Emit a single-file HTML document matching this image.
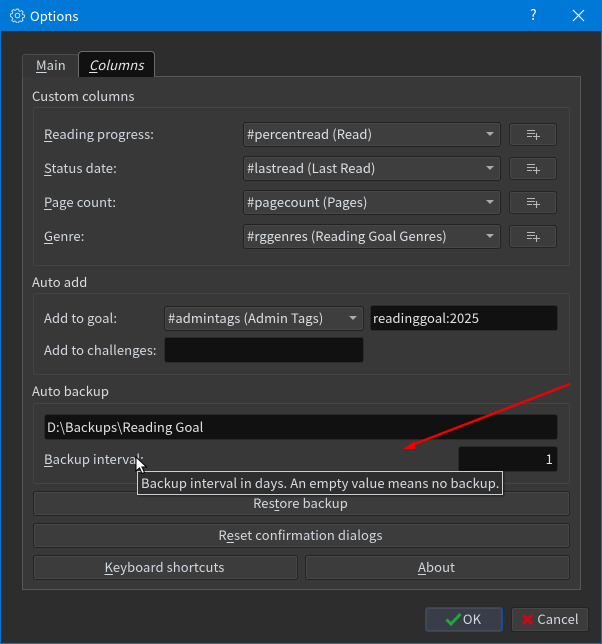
<!DOCTYPE html>
<html><head><meta charset="utf-8">
<style>
html,body{margin:0;padding:0;background:#2d2d2d}
#w{position:relative;width:602px;height:644px;overflow:hidden;background:#2d2d2d;font:13px "Noto Sans CJK JP","Liberation Sans",sans-serif;color:#d2d8de}
#w div{position:absolute;box-sizing:border-box;white-space:nowrap}
.t{line-height:18px;height:18px;letter-spacing:.1px}
.c{border:1px solid #222;border-radius:3px;background:#3e3e3e;box-shadow:inset 0 0 0 1px #474747;line-height:22px;padding-left:3px;letter-spacing:.1px;color:#dbe0e5}
.c:after{content:"";position:absolute;right:6px;top:9px;border:4px solid transparent;border-top:4px solid #aaa;border-bottom:0;width:0;height:0}
.i{background:#111;border:1px solid #2a2a2a;border-radius:3px;line-height:24px;padding-left:2px;letter-spacing:.1px;color:#dfe3e6}
.b{background:#3c3c3c;border:1px solid #242424;border-radius:3px;box-shadow:inset 0 0 0 1px #474747;text-align:center;line-height:21px;padding-right:2px;letter-spacing:.1px;color:#d2d8de}
.g{border:1px solid #444;border-radius:2px}
.gt{color:#d8dce0}
u{text-underline-offset:2px}
</style></head><body>
<div id="w">
<div style="left:0;top:0;width:602px;height:644px;border:1px solid #0078d7;border-top:0"></div>
<div style="left:0;top:0;width:602px;height:31px;background:#0078d7"></div>
<svg style="position:absolute;left:10px;top:8px" width="15" height="15" viewBox="0 0 15 15" fill="none" stroke="#cfe3f5" stroke-width="1"><circle cx="7.5" cy="7.5" r="2.3"/><path d="M6.3 1h2.4l.4 1.8 1.3.6 1.6-1 1.6 1.7-1 1.5.6 1.3 1.8.4v2.4l-1.8.4-.6 1.3 1 1.5-1.6 1.7-1.6-1-1.3.6-.4 1.8H6.300l-.4-1.800-1.300-.6-1.600 1-1.600-1.700 1-1.500-.6-1.300L0 8.700V6.300l1.800-.4.6-1.300-1-1.500L3 1.400l1.600 1 1.300-.6z" transform="translate(.5 .2) scale(.93)"/></svg>
<div class="t" style="left:30px;top:7px;color:#fff">Options</div>
<div style="left:530px;top:5px;color:#fff;font-size:14px;line-height:20px">?</div>
<svg style="position:absolute;left:572px;top:9px" width="13" height="13"><path d="M1 1L12 12M12 1L1 12" stroke="#fff" stroke-width="1.100" fill="none"/></svg>

<!-- tabs -->
<div style="left:22px;top:76px;width:559px;height:514px;background:#383838;border:1px solid #575757"></div>
<div style="left:22px;top:54px;width:57px;height:23px;background:#353535;border:1px solid #4b4b4b;border-bottom:0;border-radius:3px 3px 0 0"></div>
<div class="t" style="left:36px;top:56px"><u>M</u>ain</div>
<div style="left:78px;top:51px;width:77px;height:26px;background:#111;border:1px solid #6a6a6a;border-bottom:0;border-radius:4px 4px 0 0"></div>
<div class="t" style="left:89px;top:56px;font-style:italic;color:#e4e6e8"><u>C</u>olumns</div>

<!-- custom columns -->
<div class="t gt" style="left:32px;top:87px">Custom columns</div>
<div class="g" style="left:33px;top:107px;width:537px;height:159px"></div>
<div class="t" style="left:44px;top:125px"><u>R</u>eading progress:</div>
<div class="t" style="left:44px;top:159px"><u>S</u>tatus date:</div>
<div class="t" style="left:44px;top:193px"><u>P</u>age count:</div>
<div class="t" style="left:44px;top:227px"><u>G</u>enre:</div>
<div class="c" style="left:243px;top:122px;width:258px;height:25px">#percentread (Read)</div>
<div class="c" style="left:243px;top:156px;width:258px;height:25px">#lastread (Last Read)</div>
<div class="c" style="left:243px;top:190px;width:258px;height:25px">#pagecount (Pages)</div>
<div class="c" style="left:243px;top:224px;width:258px;height:25px">#rggenres (Reading Goal Genres)</div>
<div class="b" style="left:509px;top:123px;width:48px;height:23px"></div>
<div class="b" style="left:509px;top:157px;width:48px;height:23px"></div>
<div class="b" style="left:509px;top:191px;width:48px;height:23px"></div>
<div class="b" style="left:509px;top:225px;width:48px;height:23px"></div>
<svg style="position:absolute;left:527px;top:129px" width="14" height="11"><path d="M0 1.500H8M0 4.500H8M0 7.500H5M6 7.500H13M9.500 4V11" stroke="#b8b8b8" stroke-width="1.100" fill="none"/></svg>
<svg style="position:absolute;left:527px;top:163px" width="14" height="11"><path d="M0 1.500H8M0 4.500H8M0 7.500H5M6 7.500H13M9.500 4V11" stroke="#b8b8b8" stroke-width="1.100" fill="none"/></svg>
<svg style="position:absolute;left:527px;top:197px" width="14" height="11"><path d="M0 1.500H8M0 4.500H8M0 7.500H5M6 7.500H13M9.500 4V11" stroke="#b8b8b8" stroke-width="1.100" fill="none"/></svg>
<svg style="position:absolute;left:527px;top:231px" width="14" height="11"><path d="M0 1.500H8M0 4.500H8M0 7.500H5M6 7.500H13M9.500 4V11" stroke="#b8b8b8" stroke-width="1.100" fill="none"/></svg>

<!-- auto add -->
<div class="t gt" style="left:32px;top:273px">Auto add</div>
<div class="g" style="left:33px;top:293px;width:537px;height:82px"></div>
<div class="t" style="left:44px;top:309px">Add to goal:</div>
<div class="t" style="left:44px;top:341px">Add to challenges:</div>
<div class="c" style="left:164px;top:306px;width:200px;height:25px">#admintags (Admin Tags)</div>
<div class="i" style="left:370px;top:305px;width:188px;height:26px">readinggoal:2025</div>
<div class="i" style="left:164px;top:337px;width:200px;height:26px"></div>

<!-- auto backup -->
<div class="t gt" style="left:32px;top:382px">Auto backup</div>
<div class="g" style="left:33px;top:403px;width:537px;height:81px"></div>
<div class="i" style="left:44px;top:414px;width:514px;height:26px">D:\Backups\Reading Goal</div>
<div class="t" style="left:44px;top:450px"><u>B</u>ackup interval:</div>
<div class="i" style="left:458px;top:446px;width:100px;height:26px;text-align:right;padding-right:4px">1</div>

<!-- buttons -->
<div class="b" style="left:33px;top:491px;width:537px;height:25px">Res<u>t</u>ore backup</div>
<div class="b" style="left:33px;top:523px;width:537px;height:25px">R<u>e</u>set confirmation dialogs</div>
<div class="b" style="left:33px;top:555px;width:265px;height:25px"><u>K</u>eyboard shortcuts</div>
<div class="b" style="left:305px;top:555px;width:265px;height:25px"><u>A</u>bout</div>

<div class="b" style="left:425px;top:607px;width:78px;height:25px;background:#383d49;border-color:#0f4aa0;box-shadow:inset 0 0 0 1px #454a56;padding-left:18px">OK</div>
<svg style="position:absolute;left:445px;top:612px" width="17" height="15"><path d="M1.500 7.500L6 12L15.500 2" stroke="#1fa833" stroke-width="3" fill="none"/></svg>
<div class="b" style="left:511px;top:607px;width:78px;height:25px;padding-left:18px">Cancel</div>
<svg style="position:absolute;left:521px;top:613px" width="13" height="13"><path d="M2 2L11 11M11 2L2 11" stroke="#c40d0d" stroke-width="3.200" fill="none"/></svg>

<!-- tooltip -->
<div class="t" style="left:137px;top:471px;width:366px;height:24px;background:#2e2e2e;border:1px solid #d0d0d0;padding:0 3px;line-height:22px;box-shadow:1px 1px 2px rgba(0,0,0,.5);color:#d6dce2">Backup interval in days. An empty value means no backup.</div>

<!-- cursor -->
<svg style="position:absolute;left:135px;top:456px" width="13" height="19"><path d="M1 1V15L4.500 12L7 17.500L9.500 16.500L7 11H11.500Z" fill="#fff" stroke="#000" stroke-width="1"/></svg>

<!-- arrow -->
<svg style="position:absolute;left:0;top:0" width="602" height="644"><path d="M570 384L412 445" stroke="#f00000" stroke-width="2.400" fill="none"/><path d="M403 449L415 441L415 449Z" fill="#f00000"/></svg>
</div>
</body></html>
